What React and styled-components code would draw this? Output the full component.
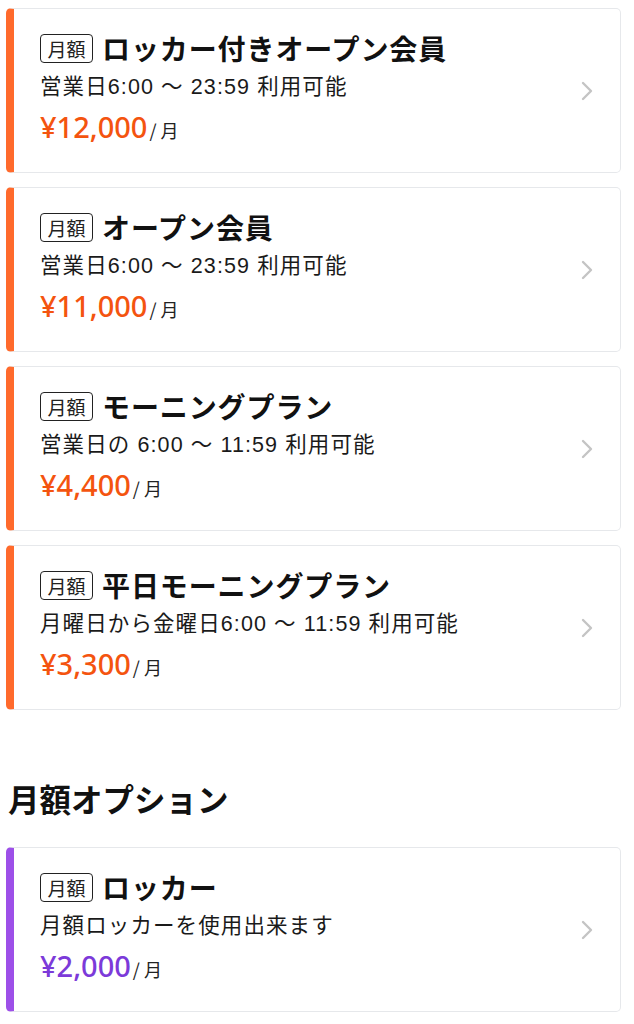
import React from "react";
import styled, { createGlobalStyle } from "styled-components";

const Global = createGlobalStyle`
  html, body { margin: 0; padding: 0; background: #ffffff; }
  body { font-family: "Noto Sans CJK JP", "Noto Sans", sans-serif; color: #111; }
`;

const LATIN = `"Liberation Sans", "Noto Sans CJK JP", sans-serif`;

const Page = styled.div`
  padding: 8px 13px 12px 6px;
  display: flex;
  flex-direction: column;
`;

const List = styled.div`
  display: flex;
  flex-direction: column;
  gap: 14px;
`;

const Card = styled.div`
  display: flex;
  align-items: center;
  height: 165px;
  box-sizing: border-box;
  border: 1.5px solid #e6e8eb;
  border-left: 8px solid ${(p) => p.$accent};
  border-radius: 5px;
  background: #fff;
`;

const Body = styled.div`
  flex: 1;
  display: flex;
  flex-direction: column;
  padding: 0 0 0 26px;
`;

const TitleRow = styled.div`
  display: flex;
  align-items: center;
  gap: 9px;
  height: 30px;
`;

const Badge = styled.span`
  display: inline-flex;
  align-items: center;
  justify-content: center;
  box-sizing: border-box;
  width: 53px;
  height: 29px;
  border: 1.5px solid #222;
  border-radius: 4px;
  font-size: 19px;
  line-height: 1;
  color: #222;
`;

const Title = styled.span`
  font-size: 28px;
  font-weight: 700;
  line-height: 30px;
  color: #111;
  letter-spacing: 0.9px;
`;

const Sub = styled.div`
  margin-top: 10px;
  font-family: ${LATIN};
  font-size: 21.5px;
  line-height: 28px;
  color: #1a1a1a;
  letter-spacing: 1.1px;
`;

const PriceRow = styled.div`
  margin-top: 8px;
  display: flex;
  align-items: baseline;
  line-height: 36px;
`;

const Price = styled.span`
  font-family: "Noto Sans", "Liberation Sans", sans-serif;
  font-size: 29px;
  font-weight: 500;
  color: ${(p) => p.$color};
`;

const Unit = styled.span`
  font-size: 18px;
  color: #222;
  margin-left: 2px;
`;

const Chevron = styled.svg`
  width: 14px;
  height: 22px;
  margin-right: 26px;
  flex-shrink: 0;
`;

const Heading = styled.h2`
  margin: 68px 0 29px 2px;
  font-size: 31.5px;
  font-weight: 700;
  line-height: 40px;
  color: #111;
`;

const ORANGE_BAR = "#ff6a2c";
const ORANGE_PRICE = "#f4540f";
const PURPLE_BAR = "#9d50e8";
const PURPLE_PRICE = "#7c3ad9";

const plans = [
  { title: "ロッカー付きオープン会員", sub: "営業日6:00 ～ 23:59 利用可能", price: "¥12,000" },
  { title: "オープン会員", sub: "営業日6:00 ～ 23:59 利用可能", price: "¥11,000" },
  { title: "モーニングプラン", sub: "営業日の 6:00 ～ 11:59 利用可能", price: "¥4,400" },
  { title: "平日モーニングプラン", sub: "月曜日から金曜日6:00 ～ 11:59 利用可能", price: "¥3,300" },
];

function PlanCard({ title, sub, price, accent, priceColor }) {
  return (
    <Card $accent={accent}>
      <Body>
        <TitleRow>
          <Badge>月額</Badge>
          <Title>{title}</Title>
        </TitleRow>
        <Sub>{sub}</Sub>
        <PriceRow>
          <Price $color={priceColor}>{price}</Price>
          <Unit>/ 月</Unit>
        </PriceRow>
      </Body>
      <Chevron viewBox="0 0 14 22">
        <path d="M3 3 L11 11 L3 19" fill="none" stroke="#c4c4c4" strokeWidth="2.4" strokeLinecap="round" strokeLinejoin="round" />
      </Chevron>
    </Card>
  );
}

export default function App() {
  return (
    <>
      <Global />
      <Page>
        <List>
          {plans.map((p) => (
            <PlanCard key={p.title} {...p} accent={ORANGE_BAR} priceColor={ORANGE_PRICE} />
          ))}
        </List>
        <Heading>月額オプション</Heading>
        <List>
          <PlanCard
            title="ロッカー"
            sub="月額ロッカーを使用出来ます"
            price="¥2,000"
            accent={PURPLE_BAR}
            priceColor={PURPLE_PRICE}
          />
        </List>
      </Page>
    </>
  );
}
